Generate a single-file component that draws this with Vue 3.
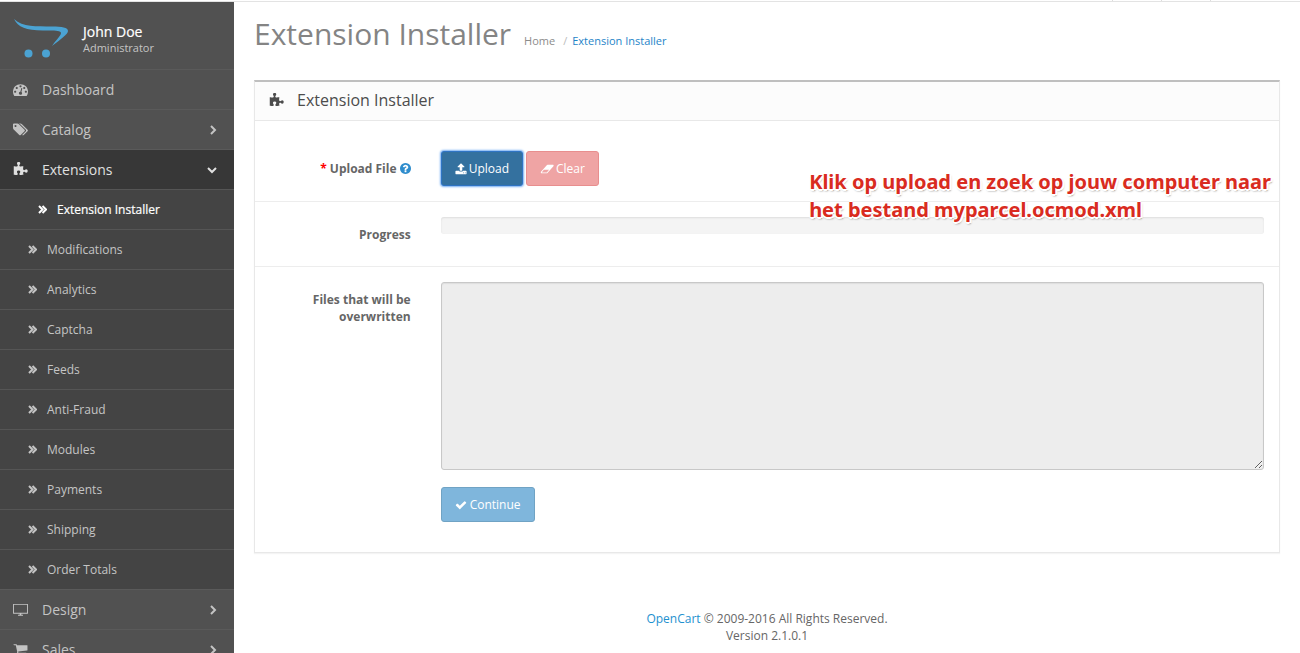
<script setup>
const icons = {
  dashboard: {
    box: '0 0 1792 1792',
    d: 'M384 1152q0-53-37.500-90.500t-90.500-37.500-90.500 37.500-37.500 90.500 37.500 90.500 90.500 37.500 90.500-37.500 37.500-90.500zm192-448q0-53-37.500-90.500t-90.500-37.500-90.500 37.500-37.500 90.500 37.500 90.500 90.500 37.500 90.500-37.500 37.500-90.500zm428 481l101-382q6-26-7.500-48.500t-38.500-29.500-48 6.500-30 39.500l-101 382q-60 5-107 43.500t-63 98.500q-20 77 20 146t117 89 146-20 89-117q16-60-6-117t-72-91zm660-33q0-53-37.500-90.500t-90.500-37.500-90.500 37.500-37.500 90.500 37.500 90.500 90.500 37.500 90.500-37.500 37.500-90.500zm-640-640q0-53-37.500-90.500t-90.500-37.500-90.500 37.500-37.500 90.500 37.500 90.500 90.500 37.500 90.500-37.500 37.500-90.500zm448 192q0-53-37.500-90.500t-90.500-37.500-90.500 37.500-37.500 90.500 37.500 90.500 90.500 37.500 90.500-37.500 37.500-90.500zm320 448q0 261-141 483-19 29-54 29h-1402q-35 0-54-29-141-221-141-483 0-182 71-348t191-286 286-191 348-71 348 71 286 191 191 286 71 348z'
  },
  tags: {
    box: '0 0 1920 1792',
    d: 'M448 448q0-53-37.500-90.500t-90.500-37.500-90.500 37.500-37.500 90.500 37.500 90.500 90.500 37.500 90.500-37.500 37.500-90.500zm1067 576q0 53-37 90l-491 492q-39 37-91 37-53 0-90-37l-715-716q-38-37-64.500-101t-26.500-117v-416q0-52 38-90t90-38h416q53 0 117 26.500t102 64.500l715 714q37 39 37 91zm384 0q0 53-37 90l-491 492q-39 37-91 37-36 0-59-14t-53-45l470-470q37-37 37-90 0-52-37-91l-715-714q-38-38-102-64.500t-117-26.500h224q53 0 117 26.500t102 64.500l715 714q37 39 37 91z'
  },
  puzzle: {
    box: '0 0 1792 1792',
    d: 'M1755 1082q0 81-44.500 135t-123.500 54q-41 0-77.500-17.500t-59-38-56.500-38-71-17.500q-110 0-110 124 0 39 16 115t15 115v5q-22 0-33 1-34 3-97.500 11.500t-115.500 13.500-98 5q-61 0-103-26.500t-42-83.500q0-37 17.500-71t38-56.500 38-59 17.500-77.500q0-79-54-123.500t-135-44.500q-84 0-143 45.500t-59 127.500q0 43 15 83t33.500 64.500 33.500 53 15 50.500q0 45-46 89-37 35-117 35-95 0-245-24-9-2-27.500-4t-27.500-4l-13-2q-1 0-3-1-2 0-2-1v-1024q2 1 17.500 3.500t34 5 21.500 3.500q150 24 245 24 80 0 117-35 46-44 46-89 0-22-15-50.500t-33.500-53-33.500-64.500-15-83q0-82 59-127.500t144-45.500q80 0 134 44.500t54 123.500q0 41-17.500 77.500t-38 59-38 56.500-17.500 71q0 57 42 83.500t103 26.500q64 0 180-15t163-17v2q-1 2-3.500 17.500t-5 34-3.500 21.500q-24 150-24 245 0 80 35 117 44 46 89 46 22 0 50.500-15t53-33.500 64.500-33.500 83-15q82 0 127.500 59t45.500 143z'
  },
  screen: {
    box: '0 0 1792 1792',
    d: 'M40 230h1712q40 0 40 40v1080q0 40-40 40h-760v130h200v110h-592v-110h200v-130h-760q-40 0-40-40v-1080q0-40 40-40zm70 110v940h1572v-940z'
  },
  cart: {
    box: '0 0 1792 1792',
    d: 'M704 1536q0 52-38 90t-90 38-90-38-38-90 38-90 90-38 90 38 38 90zm896 0q0 52-38 90t-90 38-90-38-38-90 38-90 90-38 90 38 38 90zm128-1088v512q0 24-16.500 42.500t-40.500 21.500l-1044 122q13 60 13 70 0 16-24 64h920q26 0 45 19t19 45-19 45-45 19h-1024q-26 0-45-19t-19-45q0-11 8-31.500t16-36 21.500-40 15.500-29.500l-177-823h-204q-26 0-45-19t-19-45 19-45 45-19h256q16 0 28.500 6.500t19.500 15.500 13 24.500 8 26 5.500 29.500 4.500 26h1201q26 0 45 19t19 45z'
  },
  upload: {
    box: '0 0 1792 1792',
    d: 'M1344 1472q0-26-19-45t-45-19-45 19-19 45 19 45 45 19 45-19 19-45zm256 0q0-26-19-45t-45-19-45 19-19 45 19 45 45 19 45-19 19-45zm128-224v320q0 40-28 68t-68 28h-1472q-40 0-68-28t-28-68v-320q0-40 28-68t68-28h427q21 56 70.500 92t110.500 36h256q61 0 110.500-36t70.500-92h427q40 0 68 28t28 68zm-325-648q-17 40-59 40h-256v448q0 26-19 45t-45 19h-256q-26 0-45-19t-19-45v-448h-256q-42 0-59-40-17-39 14-69l448-448q18-19 45-19t45 19l448 448q31 30 14 69z'
  },
  eraser: {
    box: '0 0 1984 1792',
    d: 'M960 1408l336-384h-768l-336 384h768zm1013-1077q15 34 9.500 71.500t-30.500 65.500l-896 1024q-38 44-96 44h-768q-38 0-69.500-20.500t-47.500-54.500q-15-34-9.500-71.500t30.500-65.500l896-1024q38-44 96-44h768q38 0 69.500 20.500t47.500 54.500z'
  },
  check: {
    box: '0 0 1792 1792',
    d: 'M1671 566q0 40-28 68l-724 724-136 136q-28 28-68 28t-68-28l-136-136-362-362q-28-28-28-68t28-68l136-136q28-28 68-28t68 28l294 295 656-657q28-28 68-28t68 28l136 136q28 28 28 68z'
  },
  question: {
    box: '128 128 1536 1536',
    d: 'M1024 1376v-192q0-14-9-23t-23-9h-192q-14 0-23 9t-9 23v192q0 14 9 23t23 9h192q14 0 23-9t9-23zm256-672q0-88-55.500-163t-138.500-116-170-41q-243 0-371 213-15 24 8 42l132 100q7 6 19 6 16 0 25-12 53-68 86-92 34-24 86-24 48 0 85.500 26t37.500 59q0 38-20 61t-68 45q-63 28-115.500 86.500t-52.500 125.500v36q0 14 9 23t23 9h192q14 0 23-9t9-23q0-19 21.500-49.500t54.500-49.500q32-18 49-28.500t46-35 44.500-48 28-60.500 12.500-81zm384 192q0 209-103 385.500t-279.500 279.500-385.500 103-385.500-103-279.500-279.500-103-385.500 103-385.500 279.500-279.500 385.500-103 385.500 103 279.500 279.500 103 385.500z'
  }
}

const menu = [
  { label: 'Dashboard', icon: 'dashboard' },
  { label: 'Catalog', icon: 'tags', arrow: true },
  {
    label: 'Extensions',
    icon: 'puzzle',
    arrow: true,
    open: true,
    children: [
      'Extension Installer', 'Modifications', 'Analytics', 'Captcha', 'Feeds',
      'Anti-Fraud', 'Modules', 'Payments', 'Shipping', 'Order Totals'
    ]
  },
  { label: 'Design', icon: 'screen', arrow: true },
  { label: 'Sales', icon: 'cart', arrow: true }
]
const current = 'Extension Installer'
</script>

<template>
  <div class="page">
    <header class="topbar"><i></i><i></i><i></i></header>
    <div class="body">
      <aside class="sidebar">
        <div class="profile">
          <svg class="logo" viewBox="0 0 54 40" aria-hidden="true">
            <path d="M0 0C9 8.500 22 7 38 7.500C48 7.500 54 8.500 54 12C54 15 47 20 38 27C41 22 47 17 47 14C47 11 38 11.500 29 11.500C12 11.500 4 8 0 0Z" />
            <circle cx="14.500" cy="34.500" r="4" /><circle cx="32" cy="34.500" r="4" />
          </svg>
          <div>
            <div class="name">John Doe</div>
            <div class="role">Administrator</div>
          </div>
        </div>
        <nav>
          <ul class="menu">
            <li v-for="item in menu" :key="item.label" :class="{ open: item.open }">
              <a href="#" class="item">
                <svg class="item-icon" :viewBox="icons[item.icon].box" aria-hidden="true"><path fill-rule="evenodd" :d="icons[item.icon].d" /></svg>
                <span>{{ item.label }}</span>
                <svg v-if="item.arrow" class="arrow" viewBox="0 0 10 10" aria-hidden="true">
                  <path :d="item.open ? 'M0 3l4 4 4-4' : 'M3 1l4 4-4 4'" />
                </svg>
              </a>
              <ul v-if="item.children" class="submenu">
                <li v-for="child in item.children" :key="child">
                  <a href="#" :class="{ active: child === current }">
                    <svg class="double" viewBox="0 0 9 9" aria-hidden="true"><path d="M1 1l3.500 3.500L1 8M4.500 1L8 4.500 4.500 8" /></svg>
                    {{ child }}
                  </a>
                </li>
              </ul>
            </li>
          </ul>
        </nav>
      </aside>

      <div class="content">
        <div class="page-header">
          <h1>Extension Installer</h1>
          <nav class="crumbs">
            <a href="#">Home</a><span class="slash">/</span><a href="#" class="here">Extension Installer</a>
          </nav>
        </div>

        <main class="panel">
          <h2 class="panel-title">
            <svg viewBox="0 0 1792 1792" aria-hidden="true"><path :d="icons.puzzle.d" /></svg>
            Extension Installer
          </h2>
          <form @submit.prevent>
            <div class="row">
              <label for="upload"><span class="required">*</span> Upload File
                <svg class="help" :viewBox="icons.question.box" aria-hidden="true"><path :d="icons.question.d" /></svg>
              </label>
              <div class="buttons">
                <button id="upload" type="button" class="btn upload"><svg :viewBox="icons.upload.box" aria-hidden="true"><path :d="icons.upload.d" /></svg>Upload</button>
                <button type="button" class="btn clear" disabled><svg :viewBox="icons.eraser.box" aria-hidden="true"><path :d="icons.eraser.d" /></svg>Clear</button>
              </div>
              <p class="note">Klik op upload en zoek op jouw computer naar<br />het bestand myparcel.ocmod.xml</p>
            </div>
            <div class="row">
              <span id="progress-label" class="label">Progress</span>
              <div class="progress" role="progressbar" aria-labelledby="progress-label" aria-valuenow="0"></div>
            </div>
            <div class="row">
              <label for="overwrite">Files that will be overwritten</label>
              <div class="field">
                <textarea id="overwrite" readonly></textarea>
                <button type="button" class="btn continue" disabled><svg :viewBox="icons.check.box" aria-hidden="true"><path :d="icons.check.d" /></svg>Continue</button>
              </div>
            </div>
          </form>
        </main>

        <footer><a href="#">OpenCart</a> © 2009-2016 All Rights Reserved.<br />Version 2.1.0.1</footer>
      </div>
    </div>
  </div>
</template>

<style>
body { background: #fff; overflow: hidden; }
</style>

<style scoped>
* { box-sizing: border-box; }
.page { height: 100vh; display: flex; flex-direction: column; overflow: hidden; font: 12px/17px "Open Sans", sans-serif; color: #666; }
a { color: #1e91cf; text-decoration: none; }
ul { list-style: none; margin: 0; padding: 0; }
.topbar { flex: none; height: 2px; border-bottom: 1px solid #e3e3e3; display: flex; justify-content: flex-end; gap: 48px; padding-right: 89px; }
.topbar i { width: 1px; background: #ddd; }
.body { flex: 1; min-height: 0; display: flex; }

.sidebar { flex: none; width: 234px; background: #515151; overflow: hidden; }
.profile { height: 67px; display: flex; align-items: flex-start; gap: 15px; padding: 17px 14px 0; }
.logo { width: 54px; height: 40px; fill: #4ba3d3; }
.name { font-size: 14px; line-height: 17px; padding-top: 4px; color: #fff; -webkit-text-stroke: 0.2px #fff; }
.role { font-size: 11px; line-height: 15px; color: #c4c4c4; }
.item { height: 40px; display: flex; align-items: center; gap: 14px; padding: 0 16px 0 13px; border-top: 1px solid #5a5a5a; color: #c4c4c4; font-size: 14px; }
.item-icon { width: 15px; height: 15px; fill: currentColor; }
.arrow { width: 10px; height: 10px; margin-left: auto; fill: none; stroke: currentColor; stroke-width: 2; overflow: visible; }
.open > .item { background: #373737 padding-box; color: #e0e0e0; }
.submenu { background: #444; }
.submenu a { height: 40px; display: flex; align-items: center; gap: 10px; padding-left: 28px; border-top: 1px solid #555; color: #c4c4c4; }
.submenu a.active { color: #fff; padding-left: 38px; -webkit-text-stroke: 0.2px #fff; }
.double { width: 9px; height: 9px; fill: none; stroke: currentColor; stroke-width: 2; }

.content { flex: 1; min-width: 0; padding: 0 20px; }
.page-header { height: 78px; display: flex; align-items: baseline; gap: 13px; padding-top: 12px; }
h1 { margin: 0; font-size: 30px; line-height: 40px; font-weight: 400; color: #848484; }
.crumbs { font-size: 11px; }
.crumbs a { color: #8c8c8c; }
.crumbs .here { color: #1e84c8; }
.slash { padding: 0 5px 0 8px; color: #bbb; }

.panel { border: 1px solid #e8e8e8; border-top: 2px solid #bfbfbf; background: #fff; padding-bottom: 15px; box-shadow: 0 1px 1px #f4f4f4; }
.panel-title { margin: 0; height: 39px; display: flex; align-items: center; gap: 13px; padding: 0 14px 2px; border-bottom: 1px solid #e8e8e8; background: #fcfcfc; font-size: 16px; font-weight: 400; color: #4c4c4c; }
.panel-title svg { width: 15px; height: 15px; fill: currentColor; }
.row { position: relative; display: grid; grid-template-columns: 1fr 5fr; padding: 15px 0; }
.row + .row { border-top: 1px solid #ededed; }
.row:first-child { padding-top: 30px; }
label, .label { padding: 9px 15px 0; text-align: right; font-weight: 700; }
.required { color: #f00; }
.help { width: 11px; height: 11px; fill: #2f8dcd; vertical-align: -1px; }
.buttons { display: flex; gap: 3px; padding: 0 15px; }
.btn { height: 35px; display: inline-flex; align-items: center; gap: 2px; padding: 0 13px; border: 1px solid; border-radius: 3px; font: 12px/17px "Open Sans", sans-serif; color: #fff; }
.btn svg { width: 12px; height: 12px; fill: currentColor; }
.btn.clear svg { width: 14px; }
.upload { background: #34719f; border-color: #2f74c4; box-shadow: 0 0 2px 1px #78b0f2; }
.clear { background: #efa4a4; border-color: #e88e8e; }
.progress { height: 17px; margin: 0 15px 17px; border-radius: 3px; background: #f4f4f4; box-shadow: inset 0 1px 2px #ddd; }
.row:nth-child(2) .label { padding-bottom: 8px; }
.field { padding: 0 15px; }
textarea { display: block; width: 100%; height: 188px; border: 1px solid #c8c8c8; border-radius: 3px; background: #ededed; box-shadow: inset 0 1px 1px #ddd; resize: vertical; }
.continue { gap: 3px; margin: 17px 0 0; background: #7fb6dc; border-color: #70a3c4; }
.note { position: absolute; right: 8px; top: 47px; z-index: 1; margin: 0; font: 700 20px/28px "Noto Sans", sans-serif; color: #d92b20; white-space: nowrap; text-shadow: 1px 0 #fff, -1px 0 #fff, 0 1px #fff, 0 -1px #fff, 1px 1px #fff, -1px 1px #fff, 2px 1px #fff, 0 2px #fff, 1px 2px 2px #777; }
footer { padding-top: 57px; text-align: center; }
</style>
